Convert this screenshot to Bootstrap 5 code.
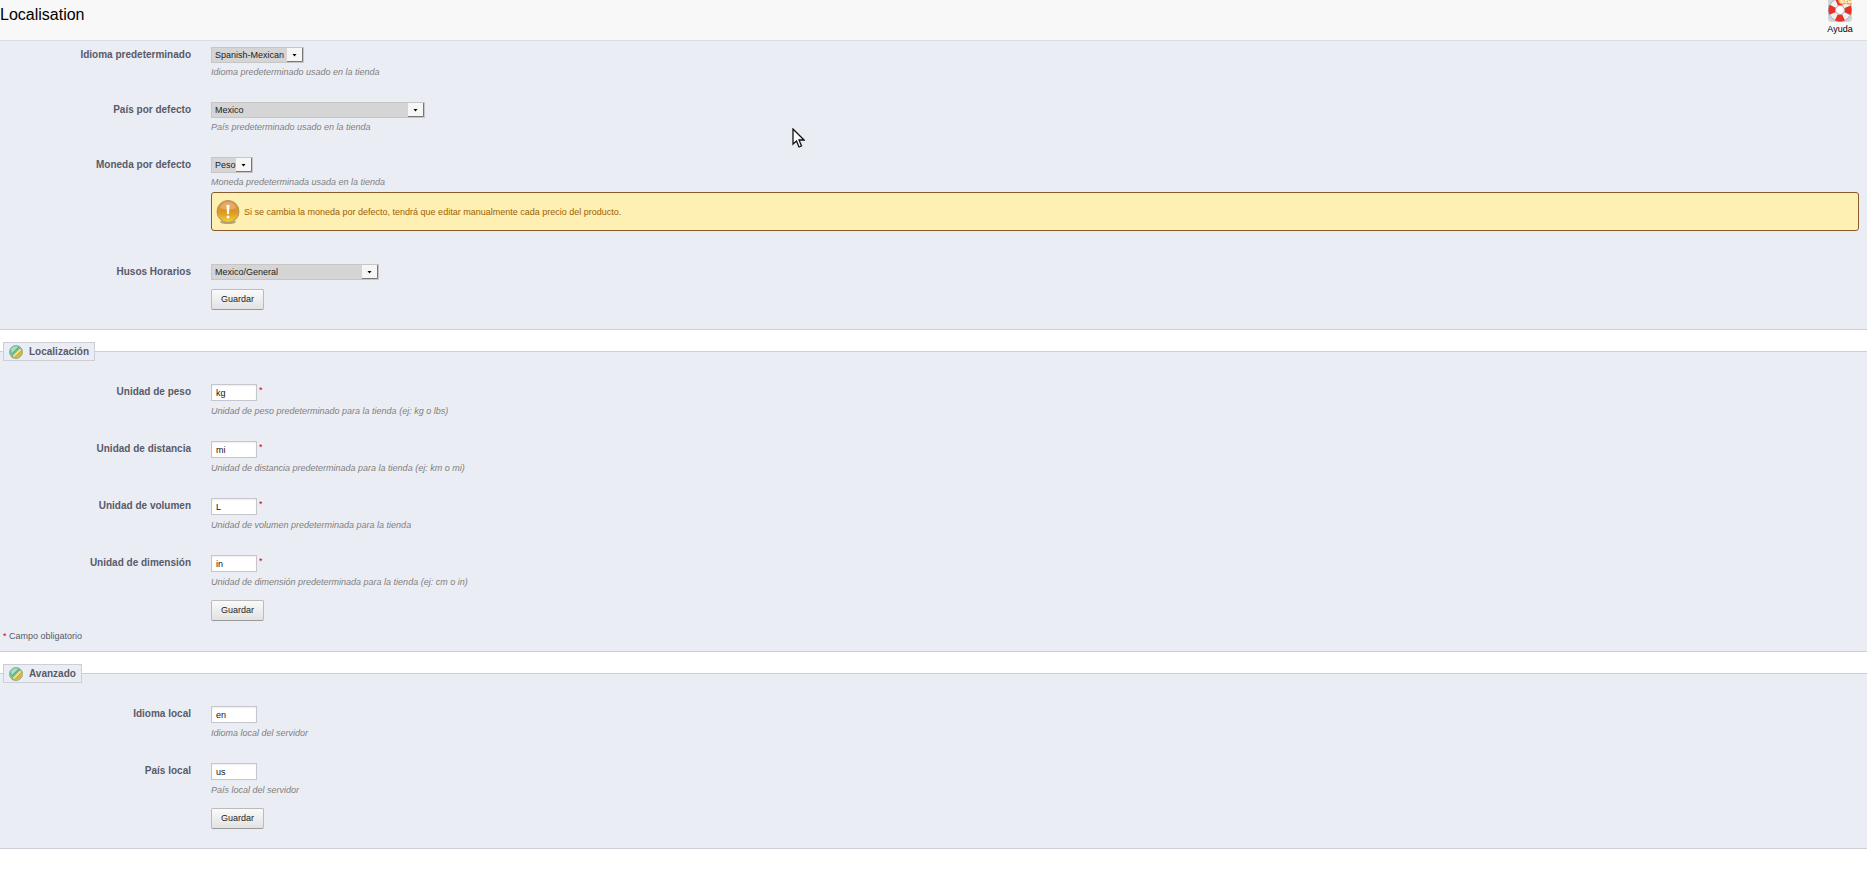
<!DOCTYPE html>
<html lang="es">
<head>
<meta charset="utf-8">
<meta name="viewport" content="width=device-width, initial-scale=1">
<title>Localisation</title>
<link href="https://cdn.jsdelivr.net/npm/bootstrap@5.3.0/dist/css/bootstrap.min.css" rel="stylesheet">
<style>
  body { font-family: "Liberation Sans", Arial, sans-serif; font-size: 9px; line-height: 18px; color: #585a69; background: #fff; }
  .page-head { height: 41px; background: #f8f8f8; border-bottom: 1px solid #dcdde2; }
  .page-title { font-size: 16px; line-height: 30px; color: #000; }
  .help-link { width: 30px; margin-right: 12px; line-height: 13px; color: #000; }
  .panel { background: #ebedf4; border: 0 solid #cccdd5; border-width: 1px 0; padding: 23px 0 19px; margin-top: 12px; min-width: 0; }
  .panel-first { border-top: 0; margin-top: 0; padding-top: 6px; }
  .panel-note { padding-bottom: 6px; }
  .panel-title { float: none; width: fit-content; height: 19px; margin: 0 0 0 3px; padding: 0 5px; border: 1px solid #cccdd5; background: #ebedf4; font-size: 10px; line-height: 17px; font-weight: 700; color: #585a69; }
  .title-in { gap: 6px; }
  .field-row { display: grid; grid-template-columns: 191px minmax(0, 1fr); column-gap: 20px; margin-bottom: 21px; }
  .field-row.last-row { margin-bottom: 0; }
  .field-row.wide-gap { margin-bottom: 33px; }
  .field-label { font-size: 10px; line-height: 16px; font-weight: 700; text-align: right; }
  .hint { font-style: italic; color: #7f7f7f; }
  .pick { display: block; appearance: none; height: 16px; padding: 0 0 0 3px; border: 1px solid #c6c6c6; border-radius: 0; font-size: 9px; line-height: 14px; color: #222;
    background: #d5d5d5 url("data:image/svg+xml,%3Csvg xmlns='http://www.w3.org/2000/svg' width='16' height='14'%3E%3Cpath fill='%23f6f6f6' d='M0 0h16v14H0z'/%3E%3Cpath fill='none' stroke='%23777' d='M15.500 0v13.500H0'/%3E%3Cpath d='M5.500 6h4L7.500 8.500z'/%3E%3C/svg%3E") right top no-repeat; }
  .pick-lang { width: 93px; }
  .pick-country { width: 214px; }
  .pick-money { width: 42px; }
  .pick-zone { width: 168px; }
  .unit { width: 46px; height: 17px; margin-bottom: 1px; padding: 1px 4px 0; border: 1px solid #c5c6cd; background: #fff; font-size: 9px; line-height: 14px; color: #111; box-shadow: inset 0 1px 2px #eee; }
  .unit-box { gap: 2px; }
  .req { color: #c00; line-height: 12px; }
  .save { width: 53px; height: 21px; margin: 9px 0 0 211px; padding: 0; border: 1px solid #bbb; border-bottom-color: #999; border-radius: 2px; background: linear-gradient(#fafafa, #e2e2e2); font-size: 9px; line-height: 17px; color: #222; }
  .warn { height: 39px; margin: 1px 8px 0 0; padding: 0 4px; border: 1px solid #8a5a2c; border-radius: 3px; background: #feefb3; color: #9f6000; }
  .note { margin: 6px 0 0 3px; }
  .pointer { left: 792px; top: 128px; }
</style>
</head>
<body>
<header class="page-head d-flex justify-content-between align-items-start">
  <h1 class="page-title fw-normal m-0">Localisation</h1>
  <a href="#" class="help-link d-flex flex-column align-items-center text-decoration-none">
    <svg width="26" height="23" viewBox="0 0 26 23" aria-hidden="true">
      <rect x="1" y="-4" width="24" height="26" rx="4" fill="#cfd6d9"/>
      <circle cx="13" cy="10" r="11.500" fill="#f1f0ee" stroke="#a9b0b3"/>
      <circle cx="13" cy="10" r="8" fill="none" stroke="#e5322b" stroke-width="7" stroke-dasharray="7.200 5.366" stroke-dashoffset="3.600"/>
      <circle cx="13" cy="10" r="4.500" fill="#fff" stroke="#b9a5a2"/>
      <path d="M11 0h14v4l-3 1-3-1-3 1-4-2z" fill="#f2b45c"/>
      <path d="M14 3V0l2 3V0M20 .500h-2v2h2M21 0l1 3 1-2 1 2 1-3" fill="none" stroke="#fff6d5"/>
    </svg>
    <span>Ayuda</span>
  </a>
</header>

<main>
<form>
  <fieldset class="panel panel-first">
    <div class="field-row">
      <label class="field-label" for="lang">Idioma predeterminado</label>
      <div><select id="lang" class="pick pick-lang"><option>Spanish-Mexican</option></select>
        <div class="hint">Idioma predeterminado usado en la tienda</div></div>
    </div>
    <div class="field-row">
      <label class="field-label" for="country">País por defecto</label>
      <div><select id="country" class="pick pick-country"><option>Mexico</option></select>
        <div class="hint">País predeterminado usado en la tienda</div></div>
    </div>
    <div class="field-row wide-gap">
      <label class="field-label" for="money">Moneda por defecto</label>
      <div><select id="money" class="pick pick-money"><option>Peso</option></select>
        <div class="hint">Moneda predeterminada usada en la tienda</div>
        <div class="warn d-flex align-items-center gap-1" role="alert">
          <svg width="24" height="26" viewBox="0 0 24 26" aria-hidden="true">
            <defs><linearGradient id="amber" x2="0" y2="1"><stop stop-color="#d99a55"/><stop offset=".5" stop-color="#dc9420"/><stop offset="1" stop-color="#f2cf3a"/></linearGradient></defs>
            <ellipse cx="12" cy="23" rx="8" ry="2" fill="#b4a878"/>
            <circle cx="12" cy="12.500" r="11" fill="url(#amber)" stroke="#b29466"/>
            <path d="M4 9a8.500 8.500 0 0 1 16 0q-8 3-16 0z" fill="#f0c28d" opacity=".5"/>
            <path d="M10.500 6h3l-.5 9h-2z" fill="#fff"/><circle cx="12" cy="18" r="1.500" fill="#fff"/>
          </svg>
          <span>Si se cambia la moneda por defecto, tendrá que editar manualmente cada precio del producto.</span>
        </div></div>
    </div>
    <div class="field-row last-row">
      <label class="field-label" for="zone">Husos Horarios</label>
      <div><select id="zone" class="pick pick-zone"><option>Mexico/General</option></select></div>
    </div>
    <button type="submit" class="save d-block">Guardar</button>
  </fieldset>
</form>

<form>
  <fieldset class="panel panel-note">
    <legend class="panel-title"><span class="title-in d-flex align-items-center">
      <svg width="14" height="14" viewBox="0 0 14 14" aria-hidden="true"><circle cx="7" cy="7" r="6.500" fill="#6fc3a0" stroke="#8bb09a"/><path d="M2 4q3-4 7-2L3 8z" fill="#a7e0c0"/><path d="M12 4l2 3-4 6H4z" fill="#d5b93c"/><path d="M11 3l2 2-7 7-3 1 1-3z" fill="#f0dc87" stroke="#97994d" stroke-width=".6"/><path d="M3 9l7-7" stroke="#4b9ec4"/></svg>
      <span>Localización</span></span></legend>
    <div class="field-row">
      <label class="field-label" for="weight">Unidad de peso</label>
      <div><div class="unit-box d-flex"><input id="weight" class="unit" type="text" value="kg"><span class="req">*</span></div>
        <div class="hint">Unidad de peso predeterminado para la tienda (ej: kg o lbs)</div></div>
    </div>
    <div class="field-row">
      <label class="field-label" for="distance">Unidad de distancia</label>
      <div><div class="unit-box d-flex"><input id="distance" class="unit" type="text" value="mi"><span class="req">*</span></div>
        <div class="hint">Unidad de distancia predeterminada para la tienda (ej: km o mi)</div></div>
    </div>
    <div class="field-row">
      <label class="field-label" for="volume">Unidad de volumen</label>
      <div><div class="unit-box d-flex"><input id="volume" class="unit" type="text" value="L"><span class="req">*</span></div>
        <div class="hint">Unidad de volumen predeterminada para la tienda</div></div>
    </div>
    <div class="field-row last-row">
      <label class="field-label" for="dimension">Unidad de dimensión</label>
      <div><div class="unit-box d-flex"><input id="dimension" class="unit" type="text" value="in"><span class="req">*</span></div>
        <div class="hint">Unidad de dimensión predeterminada para la tienda (ej: cm o in)</div></div>
    </div>
    <button type="submit" class="save d-block">Guardar</button>
    <div class="note"><span class="req">*</span> Campo obligatorio</div>
  </fieldset>
</form>

<form>
  <fieldset class="panel">
    <legend class="panel-title"><span class="title-in d-flex align-items-center">
      <svg width="14" height="14" viewBox="0 0 14 14" aria-hidden="true"><circle cx="7" cy="7" r="6.500" fill="#6fc3a0" stroke="#8bb09a"/><path d="M2 4q3-4 7-2L3 8z" fill="#a7e0c0"/><path d="M12 4l2 3-4 6H4z" fill="#d5b93c"/><path d="M11 3l2 2-7 7-3 1 1-3z" fill="#f0dc87" stroke="#97994d" stroke-width=".6"/><path d="M3 9l7-7" stroke="#4b9ec4"/></svg>
      <span>Avanzado</span></span></legend>
    <div class="field-row">
      <label class="field-label" for="locale-lang">Idioma local</label>
      <div><div class="unit-box d-flex"><input id="locale-lang" class="unit" type="text" value="en"></div>
        <div class="hint">Idioma local del servidor</div></div>
    </div>
    <div class="field-row last-row">
      <label class="field-label" for="locale-country">País local</label>
      <div><div class="unit-box d-flex"><input id="locale-country" class="unit" type="text" value="us"></div>
        <div class="hint">País local del servidor</div></div>
    </div>
    <button type="submit" class="save d-block">Guardar</button>
  </fieldset>
</form>
</main>

<svg class="pointer position-absolute pe-none" width="13" height="20" viewBox="0 0 13 20" aria-hidden="true"><path d="M1 1v15l3.500-3 2.500 6 2.500-1-2.500-6h5z" fill="#fff" stroke="#111" stroke-width="1.300"/></svg>
<script src="https://cdn.jsdelivr.net/npm/bootstrap@5.3.0/dist/js/bootstrap.bundle.min.js"></script>
</body>
</html>
